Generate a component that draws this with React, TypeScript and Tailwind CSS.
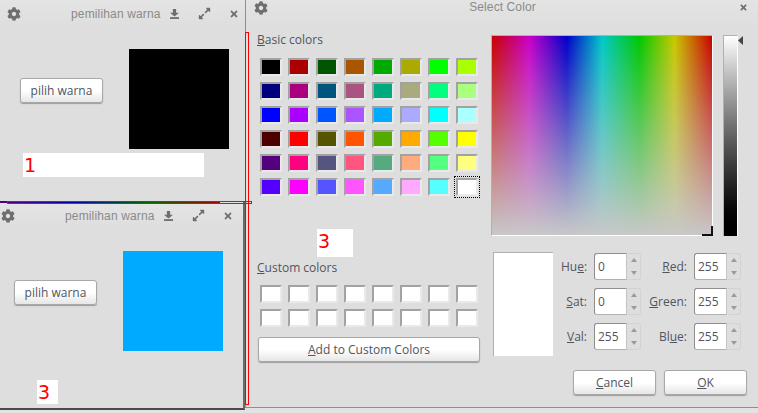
import React from 'react';
import { FaCog, FaExpandAlt, FaTimes } from 'react-icons/fa';

const basicColors = [
  'bg-[#000000]', 'bg-[#aa0000]', 'bg-[#005500]', 'bg-[#aa5500]', 'bg-[#00aa00]', 'bg-[#aaaa00]', 'bg-[#00ff00]', 'bg-[#aaff00]',
  'bg-[#00007f]', 'bg-[#aa007f]', 'bg-[#00557f]', 'bg-[#aa557f]', 'bg-[#00aa7f]', 'bg-[#aaaa7f]', 'bg-[#00ff7f]', 'bg-[#aaff7f]',
  'bg-[#0000ff]', 'bg-[#aa00ff]', 'bg-[#0055ff]', 'bg-[#aa55ff]', 'bg-[#00aaff]', 'bg-[#aaaaff]', 'bg-[#00ffff]', 'bg-[#aaffff]',
  'bg-[#4d0000]', 'bg-[#ff0000]', 'bg-[#555500]', 'bg-[#ff5500]', 'bg-[#55aa00]', 'bg-[#ffaa00]', 'bg-[#55ff00]', 'bg-[#ffff00]',
  'bg-[#55007f]', 'bg-[#ff007f]', 'bg-[#55557f]', 'bg-[#ff557f]', 'bg-[#55aa7f]', 'bg-[#ffaa7f]', 'bg-[#55ff7f]', 'bg-[#ffff7f]',
  'bg-[#5500ff]', 'bg-[#ff00ff]', 'bg-[#5555ff]', 'bg-[#ff55ff]', 'bg-[#55aaff]', 'bg-[#ffaaff]', 'bg-[#55ffff]', 'bg-[#ffffff]',
];

const DownloadIcon = () => (
  <svg viewBox="0 0 10 11" className="w-[9px] h-[10px] fill-[#6e6e6e]">
    <path d="M3.2 0h3.6v4H10L5 8.2 0 4h3.2z" />
    <rect x="0" y="9" width="10" height="2" />
  </svg>
);

const Swatch = ({ color, selected }: { color: string; selected?: boolean }) => (
  <div
    className={`h-[18px] w-[22px] border-2 border-t-[#a2a2a2] border-l-[#a2a2a2] border-r-[#e9e9e9] border-b-[#e9e9e9] ${color} ${
      selected ? 'outline outline-1 outline-dotted outline-black outline-offset-[1px]' : ''
    }`}
  />
);

const PushButton = ({ className, children }: { className: string; children: React.ReactNode }) => (
  <button className={`h-[25px] rounded-[3px] border border-[#a8a8a8] bg-gradient-to-b from-white from-50% to-[#e6e6e6] text-[12px] leading-none text-[#50555e] shadow-[0_1px_1px_rgba(0,0,0,0.3)] ${className}`}>
    {children}
  </button>
);

const Spin = ({ value }: { value: string }) => (
  <div className="flex h-[27px] w-[47px]">
    <div className="flex w-[33px] items-center rounded-l-[3px] border border-[#8e8e8e] border-r-[#c4c4c4] border-b-[#b0b0b0] bg-white pl-[3px] text-[12px] text-[#50555e]">
      {value}
    </div>
    <div className="flex w-[14px] flex-col items-center justify-between rounded-r-[3px] border border-l-0 border-[#d2d2d2] py-[4px] text-[#9a9a9a]">
      <svg viewBox="0 0 6 4" className="w-[6px] h-[4px] fill-current"><path d="M3 0l3 4H0z" /></svg>
      <svg viewBox="0 0 6 4" className="w-[6px] h-[4px] fill-current"><path d="M3 4L0 0h6z" /></svg>
    </div>
  </div>
);

const Field = ({ before, mark, after, value }: { before: string; mark: string; after: string; value: string }) => (
  <>
    <span className="text-right text-[12px] whitespace-nowrap text-[#50555e]">
      {before}
      <span className="underline">{mark}</span>
      {after}
    </span>
    <Spin value={value} />
  </>
);

const TitleBar = () => (
  <div className="flex h-[27px] items-center bg-gradient-to-b from-[#e4e4e4] to-[#dedede] pl-[7px] font-['Liberation_Sans',sans-serif] text-[12px] tracking-[0.15px] text-[#8a8a8a]">
    <FaCog className="h-[14px] w-[14px] text-[#6e6e6e]" />
    <span className="ml-[50px] w-[90px] whitespace-nowrap">pemilihan warna</span>
    <span className="ml-[9px]"><DownloadIcon /></span>
    <FaExpandAlt className="ml-[19px] h-[13px] w-[13px] text-[#6e6e6e]" />
    <FaTimes className="ml-[18px] h-[10px] w-[10px] text-[#6e6e6e]" />
  </div>
);

const PickerWindow = ({ className, color }: { className: string; color: string }) => (
  <div className={`absolute bg-[#dedede] font-['Open_Sans',sans-serif] ${className}`}>
    <TitleBar />
    <div className="flex items-start pt-[22px]">
      <PushButton className="ml-[20px] mt-[29px] w-[83px]">pilih warna</PushButton>
      <div className={`ml-[26px] h-[100px] w-[100px] ${color}`} />
    </div>
  </div>
);

const Note = ({ className, children }: { className: string; children: React.ReactNode }) => (
  <div className={`absolute bg-white pl-[1px] font-['DejaVu_Sans',sans-serif] text-[19px] leading-[24px] text-[#ff0000] ${className}`}>
    {children}
  </div>
);

export default function App() {
  return (
    <div className="relative h-[413px] w-[758px] overflow-hidden bg-[#e2e2e2]">
      <PickerWindow className="left-0 top-0 h-[202px] w-[245px]" color="bg-black" />
      <PickerWindow
        className="left-[-6px] top-[202px] h-[208px] w-[251px] border-r-2 border-b-2 border-r-[#6a6a6a] border-b-[#4a4a4a]"
        color="bg-[#00aaff]"
      />

      {/* colour dialog */}
      <div className="absolute left-[245px] top-0 h-[408px] w-[513px] border-b border-l border-[#8f8f8f] bg-[#dedede] font-['Open_Sans',sans-serif] text-[#50555e]">
        <div className="relative flex h-[27px] items-start bg-gradient-to-b from-[#e4e4e4] to-[#dedede] pl-[8px] pt-[1px]">
          <FaCog className="h-[14px] w-[14px] text-[#6e6e6e]" />
          <span className="absolute inset-x-0 top-0 pl-[1px] text-center font-['Liberation_Sans',sans-serif] text-[12px] leading-[15px] tracking-[0.1px] text-[#8a8a8a]">Select Color</span>
          <FaTimes className="absolute right-[10px] top-[3px] h-[9px] w-[9px] text-[#6e6e6e]" />
        </div>

        <div className="flex pl-[11px]">
          <div className="w-[234px]">
            <div className="mt-[4px] h-[18px] text-[12px] leading-[18px]">
              <span className="underline">B</span>asic colors
            </div>
            <div className="ml-[3px] mt-[9px] grid w-fit grid-cols-[repeat(8,22px)] gap-x-[6px] gap-y-[6px]">
              {basicColors.map((c, i) => (
                <Swatch key={c} color={c} selected={i === basicColors.length - 1} />
              ))}
            </div>
            <div className="mt-[63px] h-[18px] text-[12px] leading-[18px]">
              <span className="underline">C</span>ustom colors
            </div>
            <div className="ml-[3px] mt-[8px] grid w-fit grid-cols-[repeat(8,22px)] gap-x-[6px] gap-y-[6px]">
              {Array.from({ length: 16 }, (_, i) => (
                <Swatch key={i} color="bg-white" />
              ))}
            </div>
            <PushButton className="ml-[1px] mt-[10px] w-[222px]">
              <span className="underline">A</span>dd to Custom Colors
            </PushButton>
          </div>

          <div className="w-[256px]">
            <div className="mt-[8px] flex">
              <div className="relative h-[201px] w-[222px] border border-t-[#b0b0b0] border-l-[#b0b0b0] border-r-white border-b-white bg-[linear-gradient(to_top,#c8c8c8_0%,rgba(200,200,200,0)_100%),linear-gradient(to_right,#c80000_0%,#c800c8_17%,#0000c8_34%,#00c8c8_50%,#00c800_67%,#c8c800_83%,#c80000_100%)]">
                {/* cross hair sits on the bottom right corner */}
                <div className="absolute bottom-[-1px] right-[-1px] h-[10px] w-[11px] border-r-2 border-b-2 border-[#111111]" />
              </div>
              <div className="ml-[10px] h-[201px] w-[15px] border-t border-l border-r border-t-[#b0b0b0] border-l-[#b0b0b0] border-r-white bg-gradient-to-b from-white to-black" />
              <svg viewBox="0 0 5 9" className="mt-[1px] h-[9px] w-[5px] fill-[#444444]"><path d="M5 0v9L0 4.5z" /></svg>
            </div>
            <div className="ml-[2px] mt-[16px] flex items-start">
              <div className="h-[104px] w-[60px] border-t border-l border-[#b0b0b0] bg-white" />
              <div className="ml-[8px] grid grid-cols-[26px_47px_39px_47px] items-center gap-x-[7px] gap-y-[8px] pt-px">
                <Field before="Hu" mark="e" after=":" value="0" />
                <Field before="" mark="R" after="ed:" value="255" />
                <Field before="" mark="S" after="at:" value="0" />
                <Field before="" mark="G" after="reen:" value="255" />
                <Field before="" mark="V" after="al:" value="255" />
                <Field before="Bl" mark="u" after="e:" value="255" />
              </div>
            </div>
            <div className="ml-[82px] mt-[14px] flex gap-[8px]">
              <PushButton className="w-[83px]"><span className="underline">C</span>ancel</PushButton>
              <PushButton className="w-[83px]"><span className="underline">O</span>K</PushButton>
            </div>
          </div>
        </div>
      </div>

      <Note className="left-[23px] top-[153px] h-[24px] w-[181px]">1</Note>
      <Note className="left-[37px] top-[380px] h-[24px] w-[21px]">3</Note>
      <Note className="left-[317px] top-[229px] h-[28px] w-[36px]">3</Note>

      {/* red marks drawn over the shot */}
      <div className="absolute left-0 top-[201px] h-[2px] w-[220px] bg-[linear-gradient(to_right,#55007f,#0000aa,#006600,#aa0000)]" />
      <div className="absolute left-[7px] top-[201px] h-[3px] w-[245px] border border-[#ff0000]" />
      <div className="absolute left-[245px] top-[32px] h-[373px] w-[4px] border border-[#ff0000]" />
    </div>
  );
}
